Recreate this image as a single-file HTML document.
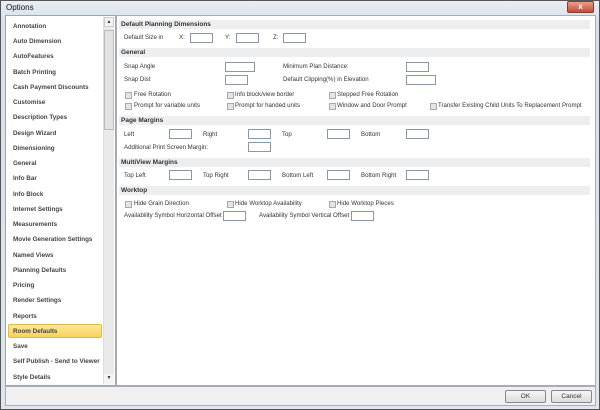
<!DOCTYPE html>
<html><head><style>
*{margin:0;padding:0;box-sizing:border-box}
body{width:600px;height:410px;background:#c9d3de;font-family:"Liberation Sans",sans-serif;font-size:6.1px;color:#333;position:relative;overflow:hidden}
.a{position:absolute;white-space:nowrap}
.win{position:absolute;left:0;top:0;width:600px;height:410px;background:linear-gradient(#e9eef4,#d8e0ea 20px,#dfe5ec);border:1px solid #555}
.list{position:absolute;left:5px;top:15px;width:111px;height:371px;background:#fff;border:1px solid #9aa}
.sb{position:absolute;left:103px;top:17px;width:11px;height:367px;background:#eaeaea;border-left:1px solid #ddd}
.panel{position:absolute;left:116px;top:15px;width:480px;height:371px;background:#fff;border:1px solid #aab}
.li{position:absolute;left:13px;font-size:6.3px;font-weight:bold;color:#444}
.hd{position:absolute;left:119px;width:471px;height:9px;background:#eceef0;font-weight:bold;font-size:6.5px;padding-left:2px;line-height:9px;color:#333}
.tb{position:absolute;height:10px;border:1px solid #8898a8;background:#fff}
.cb{position:absolute;width:7px;height:7px;border:1px solid #aaa;background:#e4e4e4}
.bot{position:absolute;left:5px;top:386px;width:591px;height:20px;background:#f0f0f0;border:1px solid #aab}
.btn{position:absolute;top:390px;width:41px;height:13px;border:1px solid #888;border-radius:2px;background:linear-gradient(#f6f6f6,#dcdcdc);text-align:center;line-height:11px;font-size:6.5px}
</style></head><body>
<div class="win"></div>
<div class="a" style="left:6px;top:3px;font-size:8px;color:#111">Options</div>
<div class="a" style="left:567px;top:1px;width:27px;height:12px;background:linear-gradient(#e8a090,#c44a36);border:1px solid #8a3a2e;border-radius:2px;color:#fff;text-align:center;font-size:8px;line-height:10px;font-weight:bold">x</div>
<div class="list"></div>
<div class="sb"></div>
<div class="a" style="left:104px;top:17px;width:10px;height:10px;background:#f4f4f4;border:1px solid #ccc;font-size:5px;text-align:center;line-height:9px">▲</div>
<div class="a" style="left:104px;top:30px;width:10px;height:100px;background:#e2e2e2;border:1px solid #bbb"></div>
<div class="a" style="left:104px;top:374px;width:10px;height:10px;background:#f4f4f4;font-size:5px;text-align:center;line-height:9px">▼</div>
<div class="a" style="left:8px;top:324px;width:94px;height:14px;background:linear-gradient(#fde99a,#f8d25a);border:1px solid #e2b84a;border-radius:2px"></div>
<div class="li" style="top:23px">Annotation</div>
<div class="li" style="top:38px">Auto Dimension</div>
<div class="li" style="top:53px">AutoFeatures</div>
<div class="li" style="top:69px">Batch Printing</div>
<div class="li" style="top:84px">Cash Payment Discounts</div>
<div class="li" style="top:99px">Customise</div>
<div class="li" style="top:114px">Description Types</div>
<div class="li" style="top:130px">Design Wizard</div>
<div class="li" style="top:145px">Dimensioning</div>
<div class="li" style="top:160px">General</div>
<div class="li" style="top:175px">Info Bar</div>
<div class="li" style="top:191px">Info Block</div>
<div class="li" style="top:206px">Internet Settings</div>
<div class="li" style="top:221px">Measurements</div>
<div class="li" style="top:236px">Movie Generation Settings</div>
<div class="li" style="top:252px">Named Views</div>
<div class="li" style="top:267px">Planning Defaults</div>
<div class="li" style="top:282px">Pricing</div>
<div class="li" style="top:297px">Render Settings</div>
<div class="li" style="top:313px">Reports</div>
<div class="li" style="top:328px">Room Defaults</div>
<div class="li" style="top:343px">Save</div>
<div class="li" style="top:358px">Self Publish - Send to Viewer</div>
<div class="li" style="top:374px">Style Details</div>
<div class="panel"></div>
<div class="hd" style="top:20px">Default Planning Dimensions</div>
<div class="a" style="left:124px;top:34px">Default Size in</div>
<div class="a" style="left:179px;top:34px">X:</div><div class="tb" style="left:190px;top:33px;width:23px"></div>
<div class="a" style="left:225px;top:34px">Y:</div><div class="tb" style="left:236px;top:33px;width:23px"></div>
<div class="a" style="left:273px;top:34px">Z:</div><div class="tb" style="left:283px;top:33px;width:23px"></div>
<div class="hd" style="top:48px">General</div>
<div class="a" style="left:124px;top:63px">Snap Angle</div><div class="tb" style="left:225px;top:62px;width:30px"></div>
<div class="a" style="left:124px;top:76px">Snap Dist</div><div class="tb" style="left:225px;top:75px;width:23px"></div>
<div class="a" style="left:283px;top:63px">Minimum Plan Distance:</div><div class="tb" style="left:406px;top:62px;width:23px"></div>
<div class="a" style="left:283px;top:76px">Default Clipping(%) in Elevation</div><div class="tb" style="left:406px;top:75px;width:30px"></div>
<div class="cb" style="left:125px;top:92px"></div><div class="a" style="left:134px;top:91px">Free Rotation</div>
<div class="cb" style="left:227px;top:92px"></div><div class="a" style="left:235px;top:91px">Info block/view border</div>
<div class="cb" style="left:329px;top:92px"></div><div class="a" style="left:337px;top:91px">Stepped Free Rotation</div>
<div class="cb" style="left:125px;top:103px"></div><div class="a" style="left:134px;top:102px">Prompt for variable units</div>
<div class="cb" style="left:227px;top:103px"></div><div class="a" style="left:235px;top:102px">Prompt for handed units</div>
<div class="cb" style="left:329px;top:103px"></div><div class="a" style="left:337px;top:102px">Window and Door Prompt</div>
<div class="cb" style="left:430px;top:103px"></div><div class="a" style="left:438px;top:102px">Transfer Existing Child Units To Replacement Prompt</div>
<div class="hd" style="top:116px">Page Margins</div>
<div class="a" style="left:124px;top:131px">Left</div><div class="tb" style="left:169px;top:129px;width:23px"></div>
<div class="a" style="left:203px;top:131px">Right</div><div class="tb" style="left:248px;top:129px;width:23px"></div>
<div class="a" style="left:282px;top:131px">Top</div><div class="tb" style="left:327px;top:129px;width:23px"></div>
<div class="a" style="left:361px;top:131px">Bottom</div><div class="tb" style="left:406px;top:129px;width:23px"></div>
<div class="a" style="left:124px;top:144px">Additional Print Screen Margin:</div><div class="tb" style="left:248px;top:142px;width:23px"></div>
<div class="hd" style="top:158px">MultiView Margins</div>
<div class="a" style="left:124px;top:172px">Top Left</div><div class="tb" style="left:169px;top:170px;width:23px"></div>
<div class="a" style="left:203px;top:172px">Top Right</div><div class="tb" style="left:248px;top:170px;width:23px"></div>
<div class="a" style="left:282px;top:172px">Bottom Left</div><div class="tb" style="left:327px;top:170px;width:23px"></div>
<div class="a" style="left:361px;top:172px">Bottom Right</div><div class="tb" style="left:406px;top:170px;width:23px"></div>
<div class="hd" style="top:186px">Worktop</div>
<div class="cb" style="left:125px;top:201px"></div><div class="a" style="left:134px;top:200px">Hide Grain Direction</div>
<div class="cb" style="left:227px;top:201px"></div><div class="a" style="left:235px;top:200px">Hide Worktop Availability</div>
<div class="cb" style="left:329px;top:201px"></div><div class="a" style="left:337px;top:200px">Hide Worktop Pieces</div>
<div class="a" style="left:124px;top:212px">Availability Symbol Horizontal Offset</div><div class="tb" style="left:223px;top:211px;width:23px"></div>
<div class="a" style="left:259px;top:212px">Availability Symbol Vertical Offset</div><div class="tb" style="left:351px;top:211px;width:23px"></div>
<div class="bot"></div>
<div class="btn" style="left:505px">OK</div>
<div class="btn" style="left:551px">Cancel</div>
</body></html>
